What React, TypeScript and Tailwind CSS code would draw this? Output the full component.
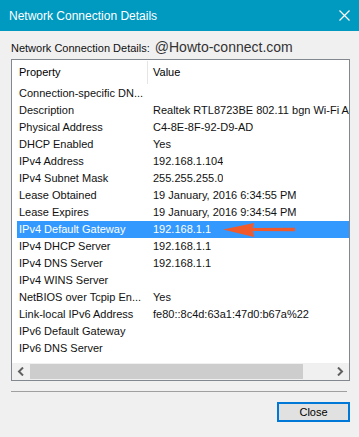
import React from "react";

const rows: [string, string][] = [
  ["Connection-specific DN...", ""],
  ["Description", "Realtek RTL8723BE 802.11 bgn Wi-Fi Adapter"],
  ["Physical Address", "C4-8E-8F-92-D9-AD"],
  ["DHCP Enabled", "Yes"],
  ["IPv4 Address", "192.168.1.104"],
  ["IPv4 Subnet Mask", "255.255.255.0"],
  ["Lease Obtained", "19 January, 2016 6:34:55 PM"],
  ["Lease Expires", "19 January, 2016 9:34:54 PM"],
  ["IPv4 Default Gateway", "192.168.1.1"],
  ["IPv4 DHCP Server", "192.168.1.1"],
  ["IPv4 DNS Server", "192.168.1.1"],
  ["IPv4 WINS Server", ""],
  ["NetBIOS over Tcpip En...", "Yes"],
  ["Link-local IPv6 Address", "fe80::8c4d:63a1:47d0:b67a%22"],
  ["IPv6 Default Gateway", ""],
  ["IPv6 DNS Server", ""],
];

export default function App() {
  return (
    <div
      className="w-[359px] h-[437px] bg-[#f0f0f0] flex flex-col overflow-hidden text-black"
      style={{ fontFamily: '"Liberation Sans", Arial, sans-serif' }}
    >
      {/* Title bar */}
      <div className="h-[31px] bg-[#0099bf] flex items-center pl-[9px] pr-[9px] text-white text-[12px] shrink-0">
        <span className="flex-1">Network Connection Details</span>
        <svg width="11" height="11" viewBox="0 0 11 11">
          <path d="M0.5 0.5 L10.5 10.5 M10.5 0.5 L0.5 10.5" stroke="white" strokeWidth="1.2" />
        </svg>
      </div>

      {/* Label row */}
      <div className="flex items-baseline pl-[11px] pt-[9px] h-[28px] shrink-0">
        <span className="text-[11px] leading-[13px] text-[#111]">Network Connection Details:</span>
        <span className="ml-[5px] text-[14px] leading-[15px] text-[#333]">@Howto-connect.com</span>
      </div>

      {/* List box */}
      <div className="ml-[11px] w-[339px] h-[322px] border border-[#828790] bg-white flex flex-col shrink-0">
        <div className="h-[25px] flex items-center text-[11px] shrink-0">
          <span className="w-[135px] pl-[7px]">Property</span>
          <span className="w-px h-[23px] bg-[#e5e5e5]" />
          <span className="pl-[5px]">Value</span>
        </div>
        <div className="flex-1 overflow-hidden pl-[5px]">
          {rows.map(([k, v], i) => {
            const sel = i === 8;
            return (
              <div
                key={k}
                className={
                  "relative h-[17px] flex items-center text-[11px] whitespace-nowrap " +
                  (sel ? "bg-[#3399ff] text-white" : "text-[#111]")
                }
              >
                <span className="w-[134px] pl-[2px] shrink-0">{k}</span>
                <span className="pl-[2px] overflow-hidden">{v}</span>
                {sel && (
                  <svg
                    width="74"
                    height="17"
                    viewBox="0 0 74 17"
                    className="absolute left-[205px] top-0"
                  >
                    <path d="M1 8.5 L32 2 L31 7 L73 6.8 L73 10.2 L31 10 L32 16 Z" fill="#f15a2a" />
                  </svg>
                )}
              </div>
            );
          })}
        </div>
        {/* Horizontal scrollbar */}
        <div className="h-[17px] bg-[#f0f0f0] flex items-center shrink-0">
          <div className="w-[18px] h-[17px] flex items-center justify-center">
            <svg width="8" height="9" viewBox="0 0 8 9">
              <path d="M6 0.5 L2 4.5 L6 8.5" stroke="#606060" strokeWidth="2" fill="none" />
            </svg>
          </div>
          <div className="w-[273px] h-[15px] bg-[#cdcdcd]" />
          <div className="flex-1" />
          <div className="w-[18px] h-[17px] flex items-center justify-center">
            <svg width="8" height="9" viewBox="0 0 8 9">
              <path d="M2 0.5 L6 4.5 L2 8.5" stroke="#606060" strokeWidth="2" fill="none" />
            </svg>
          </div>
        </div>
      </div>

      {/* Separator */}
      <div className="ml-[11px] mt-[10px] w-[336px] h-px bg-[#a0a0a0] shrink-0" />

      {/* Close button */}
      <div className="flex justify-end pr-[9px] mt-[10px] shrink-0">
        <button className="w-[73px] h-[20px] border-2 border-[#0078d7] bg-[#e1e1e1] text-[11px] text-black flex items-center justify-center">
          Close
        </button>
      </div>
    </div>
  );
}
